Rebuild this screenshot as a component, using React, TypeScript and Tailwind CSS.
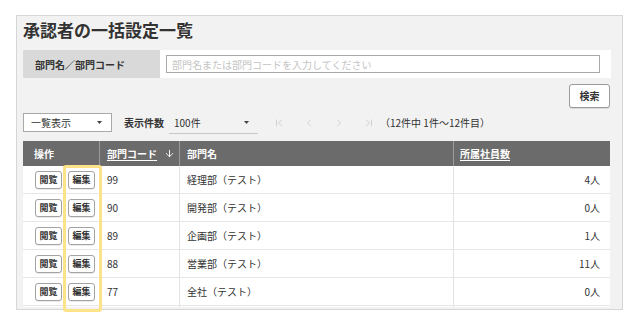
import React from "react";
import { ArrowDown, ChevronFirst, ChevronLast, ChevronLeft, ChevronRight } from "lucide-react";

interface Dept {
  code: string;
  name: string;
  members: string;
}

const DEPTS: Dept[] = [
  { code: "99", name: "経理部（テスト）", members: "4人" },
  { code: "90", name: "開発部（テスト）", members: "0人" },
  { code: "89", name: "企画部（テスト）", members: "1人" },
  { code: "88", name: "営業部（テスト）", members: "11人" },
  { code: "77", name: "全社（テスト）", members: "0人" },
];

const FONT = "font-['Meiryo','Noto_Sans_CJK_JP',sans-serif]";

function Caret() {
  return (
    <svg width="5" height="3" viewBox="0 0 5 3" className="shrink-0">
      <path d="M0 0h5L2.5 3z" fill="#444" />
    </svg>
  );
}

function SmallButton({ label }: { label: string }) {
  return (
    <button className="w-[27px] h-[18px] rounded-[3px] border border-[#a3a3a3] bg-white text-[9px] font-bold text-[#333] leading-none flex items-center justify-center shadow-[0_1px_0_rgba(0,0,0,0.08)]">
      {label}
    </button>
  );
}

export default function App() {
  return (
    <div className={`relative w-[636px] h-[319px] bg-white pt-[15px] pl-[16px] text-[#333] ${FONT}`}>
      {/* Panel */}
      <div className="w-[607px] h-[295px] border border-[#d6d6d6] bg-[#f2f2f2] pl-[6px] pr-[11px] pt-[2px]">
        <h1 className="text-[17px] leading-[24px] font-bold text-[#333] mb-[8px]">承認者の一括設定一覧</h1>

        {/* Search row */}
        <div className="flex h-[28px] w-[588px]">
          <div className="w-[137px] bg-[#d9d9d9] flex items-center pl-[12px] text-[10px] font-bold">
            部門名／部門コード
          </div>
          <div className="flex-1 bg-white flex items-center pl-[6px] pr-[11px]">
            <input
              className="w-full h-[18px] border border-[#a9a9a9] bg-white px-[5px] text-[10px] outline-none placeholder:text-[#c4c4c4]"
              placeholder="部門名または部門コードを入力してください"
            />
          </div>
        </div>

        {/* Search button */}
        <div className="flex justify-end w-[587px] mt-[6px]">
          <button className="w-[41px] h-[24px] rounded-[3px] border border-[#9a9a9a] bg-white text-[10px] font-bold leading-none shadow-[0_1px_0_rgba(0,0,0,0.1)]">
            検索
          </button>
        </div>

        {/* Controls */}
        <div className="flex items-start h-[21px] mt-[5px]">
          <div className="w-[89px] h-[19px] border border-[#a9a9a9] bg-white flex items-center justify-between pl-[7px] pr-[9px] text-[10px]">
            <span>一覧表示</span>
            <Caret />
          </div>
          <span className="ml-[12px] h-[19px] flex items-center text-[10px] font-bold">表示件数</span>
          <div className="ml-[5px] w-[89px] h-[21px] border-b border-[#c8c8c8] flex items-start pt-[2px] justify-between pl-[5px] pr-[9px] text-[10px]">
            <span>100件</span>
            <span className="pt-[6px]"><Caret /></span>
          </div>
          <div className="flex items-center h-[19px] ml-[15px] gap-[18px] text-[#c6c6c6]">
            <ChevronFirst size={12} strokeWidth={1.5} />
            <ChevronLeft size={12} strokeWidth={1.5} />
            <ChevronRight size={12} strokeWidth={1.5} />
            <ChevronLast size={12} strokeWidth={1.5} />
          </div>
          <span className="ml-[5px] h-[19px] flex items-center text-[10px]">（12件中 1件～12件目）</span>
        </div>

        {/* Table */}
        <div className="mt-[7px] w-[587px] h-[166px] bg-white overflow-hidden">
          <div className="grid grid-cols-[77px_80px_274px_156px] h-[25px] bg-[#6b6b6b] text-white text-[10px] font-bold">
            <div className="flex items-center pl-[11px] border-r border-[#9b9b9b]">操作</div>
            <div className="flex items-center pl-[7px] gap-[7px] border-r border-[#9b9b9b]">
              <span className="underline underline-offset-2">部門コード</span>
              <ArrowDown size={11} strokeWidth={2} />
            </div>
            <div className="flex items-center pl-[7px] border-r border-[#9b9b9b]">部門名</div>
            <div className="flex items-center pl-[6px]">
              <span className="underline underline-offset-2">所属社員数</span>
            </div>
          </div>
          {DEPTS.map((d) => (
            <div
              key={d.code}
              className="grid grid-cols-[77px_80px_274px_156px] h-[28px] border-b border-[#e6e6e6] text-[10px]"
            >
              <div className="flex items-center pl-[12px] gap-[6px] border-r border-[#e3e3e3]">
                <SmallButton label="閲覧" />
                <SmallButton label="編集" />
              </div>
              <div className="flex items-center pl-[7px] border-r border-[#e3e3e3]">{d.code}</div>
              <div className="flex items-center pl-[7px] border-r border-[#e3e3e3]">{d.name}</div>
              <div className="flex items-center justify-end pr-[10px]">{d.members}</div>
            </div>
          ))}
          <div className="grid grid-cols-[77px_80px_274px_156px] h-[28px]">
            <div className="border-r border-[#e3e3e3]" />
            <div className="border-r border-[#e3e3e3]" />
            <div className="border-r border-[#e3e3e3]" />
            <div />
          </div>
        </div>
      </div>

      {/* Highlight around the edit column */}
      <div className="absolute left-[63px] top-[165px] w-[39px] h-[147px] border-[3px] border-[#fce38a] rounded-[3px] pointer-events-none" />
    </div>
  );
}
